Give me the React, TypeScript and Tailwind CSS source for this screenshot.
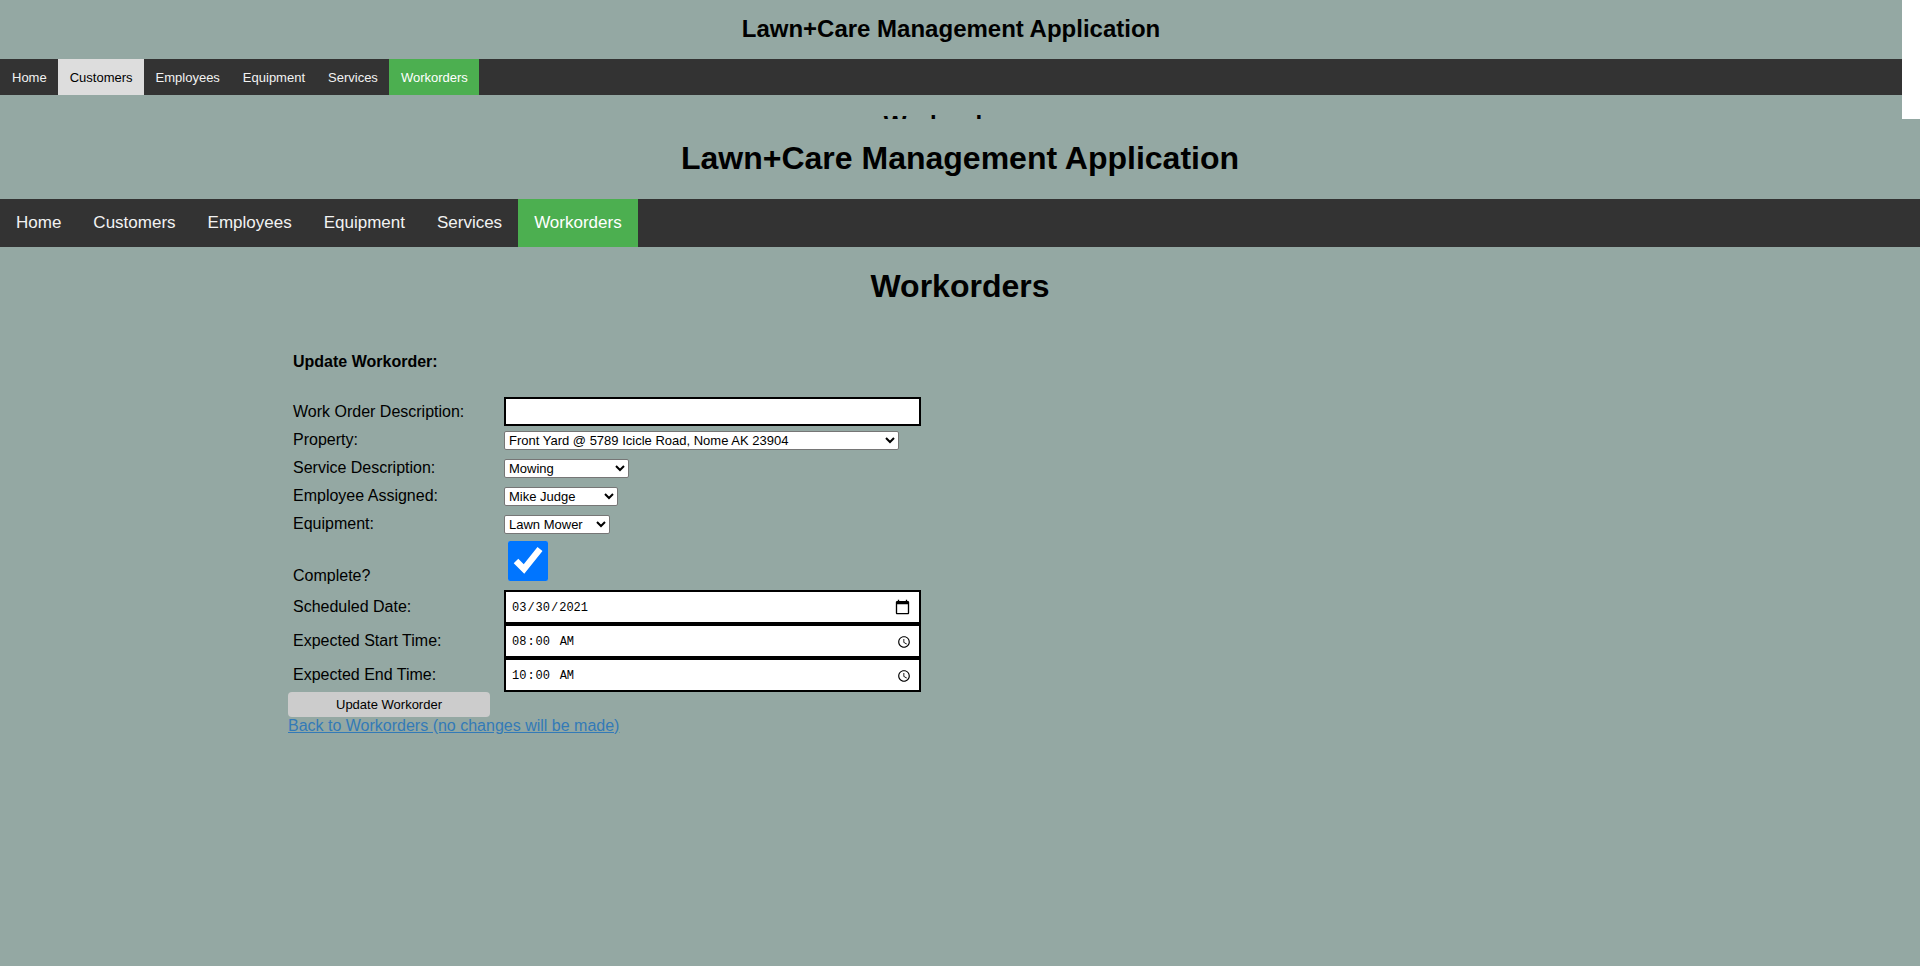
import { useState } from "react";

const pages = ["Home", "Customers", "Employees", "Equipment", "Services", "Workorders"];

const selectClass =
  "h-[19px] rounded-xs border border-[#767676] bg-white text-[13px] leading-4 text-black";
const boxClass = "w-[417px] border-2 border-black bg-white";
const timeClass =
  "h-[34px] pt-px pr-2 pl-[5px] font-['Liberation_Mono',monospace] text-[12px] [&::-webkit-calendar-picker-indicator]:p-0 [&::-webkit-datetime-edit-ampm-field]:ml-1 " +
  boxClass;
const rowLabelClass = "w-[216px] pl-[5px]";

function PreviewHeader() {
  return (
    <div className="bg-white pr-[18px]">
      <header className="bg-[#94a8a3]">
        <p className="pt-[15px] pb-4 text-center text-2xl leading-7 font-bold">
          Lawn+Care Management Application
        </p>
        <nav aria-label="Preview" className="flex h-9 bg-[#333]">
          {pages.map((page) => (
            <a
              key={page}
              href="#"
              className={
                "flex items-center pt-0.5 pr-[11px] pl-3 text-[13px] " +
                (page === "Workorders"
                  ? "bg-[#4caf50] text-white"
                  : page === "Customers"
                    ? "bg-[#ddd] text-black"
                    : "text-[#f2f2f2]")
              }
            >
              {page}
            </a>
          ))}
        </nav>
        <div className="h-6 overflow-hidden pt-4">
          <p className="text-center text-2xl leading-7 font-bold">Workorders</p>
        </div>
      </header>
    </div>
  );
}

function SiteHeader() {
  return (
    <header>
      <h1 className="pt-5 pb-[22px] text-center text-[32px] leading-[38px] font-bold">
        Lawn+Care Management Application
      </h1>
      <nav aria-label="Main" className="flex h-12 bg-[#333]">
        {pages.map((page) => (
          <a
            key={page}
            href="#"
            className={
              "flex items-center px-4 text-[17px] " +
              (page === "Workorders" ? "bg-[#4caf50] text-white" : "text-[#f2f2f2]")
            }
          >
            {page}
          </a>
        ))}
      </nav>
    </header>
  );
}

function WorkorderForm() {
  const [complete, setComplete] = useState(true);
  return (
    <form className="ml-[15%] text-base leading-6" onSubmit={(e) => e.preventDefault()}>
      <h3 className="mb-[23px] pl-[5px] font-bold">Update Workorder:</h3>
      <div className="flex items-center">
        <label htmlFor="description" className={rowLabelClass}>Work Order Description:</label>
        <input id="description" type="text" className={"h-[29px] px-[5px] text-[13px] " + boxClass} />
      </div>
      <div className="flex h-7 items-center">
        <label htmlFor="property" className={rowLabelClass}>Property:</label>
        <select id="property" className={"w-[395px] " + selectClass}>
          <option>Front Yard @ 5789 Icicle Road, Nome AK 23904</option>
        </select>
      </div>
      <div className="flex h-7 items-center">
        <label htmlFor="service" className={rowLabelClass}>Service Description:</label>
        <select id="service" className={"w-[125px] " + selectClass}>
          <option>Mowing</option>
        </select>
      </div>
      <div className="flex h-7 items-center">
        <label htmlFor="employee" className={rowLabelClass}>Employee Assigned:</label>
        <select id="employee" className={"w-[114px] " + selectClass}>
          <option>Mike Judge</option>
        </select>
      </div>
      <div className="flex h-7 items-center">
        <label htmlFor="equipment" className={rowLabelClass}>Equipment:</label>
        <select id="equipment" className={"w-[106px] " + selectClass}>
          <option>Lawn Mower</option>
        </select>
      </div>
      <div className="flex h-[52px] items-end pb-0.5">
        <label htmlFor="complete" className={rowLabelClass}>Complete?</label>
        <input
          id="complete"
          type="checkbox"
          checked={complete}
          onChange={(e) => setComplete(e.target.checked)}
          className="mb-[7px] ml-1 size-10"
        />
      </div>
      <div className="flex items-center">
        <label htmlFor="date" className={rowLabelClass}>Scheduled Date:</label>
        <input
          id="date"
          type="date"
          defaultValue="2021-03-30"
          className={"[&::-webkit-calendar-picker-indicator]:size-[17px] " + timeClass}
        />
      </div>
      <div className="flex items-center">
        <label htmlFor="start" className={rowLabelClass}>Expected Start Time:</label>
        <input
          id="start"
          type="time"
          defaultValue="08:00"
          className={"[&::-webkit-calendar-picker-indicator]:size-[14px] " + timeClass}
        />
      </div>
      <div className="flex items-center">
        <label htmlFor="end" className={rowLabelClass}>Expected End Time:</label>
        <input
          id="end"
          type="time"
          defaultValue="10:00"
          className={"[&::-webkit-calendar-picker-indicator]:size-[14px] " + timeClass}
        />
      </div>
      <button type="submit" className="block h-[25px] w-[202px] rounded bg-[#ccc] text-[13px] leading-4">
        Update Workorder
      </button>
      <a href="#" className="block w-fit leading-[18px] text-[#337ab7] underline">
        Back to Workorders (no changes will be made)
      </a>
    </form>
  );
}

export default function App() {
  return (
    <div className="min-h-screen bg-[#94a8a3] font-['Liberation_Sans',Arial,sans-serif] text-black">
      <PreviewHeader />
      <SiteHeader />
      <main>
        <h2 className="mb-[45px] pt-5 text-center text-[32px] leading-[38px] font-bold">Workorders</h2>
        <WorkorderForm />
      </main>
    </div>
  );
}
